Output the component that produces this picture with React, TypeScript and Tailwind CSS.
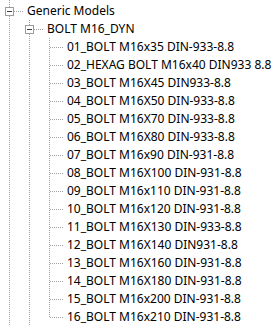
const leaves = [
  "01_BOLT M16x35 DIN-933-8.8",
  "02_HEXAG BOLT M16x40 DIN933 8.8",
  "03_BOLT M16X45 DIN933-8.8",
  "04_BOLT M16X50 DIN-933-8.8",
  "05_BOLT M16X70 DIN-933-8.8",
  "06_BOLT M16X80 DIN-933-8.8",
  "07_BOLT M16x90 DIN-931-8.8",
  "08_BOLT M16X100 DIN-931-8.8",
  "09_BOLT M16x110 DIN-931-8.8",
  "10_BOLT M16x120 DIN-931-8.8",
  "11_BOLT M16X130 DIN-933-8.8",
  "12_BOLT M16X140 DIN931-8.8",
  "13_BOLT M16X160 DIN-931-8.8",
  "14_BOLT M16X180 DIN-931-8.8",
  "15_BOLT M16x200 DIN-931-8.8",
  "16_BOLT M16x210 DIN-931-8.8",
];

// dotted tree lines, 1px on / 1px off
const vDots = "w-px bg-[repeating-linear-gradient(to_bottom,#a0a0a0_0_1px,transparent_1px_2px)]";
const hDots = "h-px bg-[repeating-linear-gradient(to_right,#a0a0a0_0_1px,transparent_1px_2px)]";

const Indent = ({ h = "h-[18px]" }: { h?: string }) => (
  <div className={`flex w-[20px] ${h} shrink-0 pl-[9px]`}>
    <div className={`${vDots} h-full`} />
  </div>
);

const Connector = ({ box = false, last = false }: { box?: boolean; last?: boolean }) => (
  <div className="relative flex w-[24px] h-[18px] shrink-0 pl-[9px]">
    <div className="flex flex-col w-px h-full">
      <div className={`${vDots} h-[10px]`} />
      {!last && <div className={`${vDots} flex-1`} />}
    </div>
    <div className="flex flex-1 flex-col pt-[9px]">
      <div className={hDots} />
    </div>
    {box && (
      <div className="absolute left-[5px] top-[5px] w-[9px] h-[9px] border border-[#9c9c9c] bg-white flex items-center justify-center">
        <div className="w-[5px] h-px bg-[#3c3c3c]" />
      </div>
    )}
  </div>
);

const Row = ({ level, label, box, last }: { level: number; label: string; box?: boolean; last?: boolean }) => (
  <div className="flex items-center h-[18px]">
    {Array.from({ length: level }).map((_, i) => (
      <Indent key={i} />
    ))}
    <Connector box={box} last={last} />
    <span className="pl-[3px] leading-[18px] whitespace-nowrap">{label}</span>
  </div>
);

export default function App() {
  return (
    <div className="w-[273px] h-[327px] bg-white overflow-hidden text-[12px] text-black font-['Noto_Sans',sans-serif]">
      <div className="flex">
        <Indent h="h-[2px]" />
      </div>
      <Row level={0} label="Generic Models" box />
      <Row level={1} label="BOLT M16_DYN" box />
      {leaves.map((leaf, i) => (
        <Row key={leaf} level={2} label={leaf} last={i === leaves.length - 1} />
      ))}
    </div>
  );
}
